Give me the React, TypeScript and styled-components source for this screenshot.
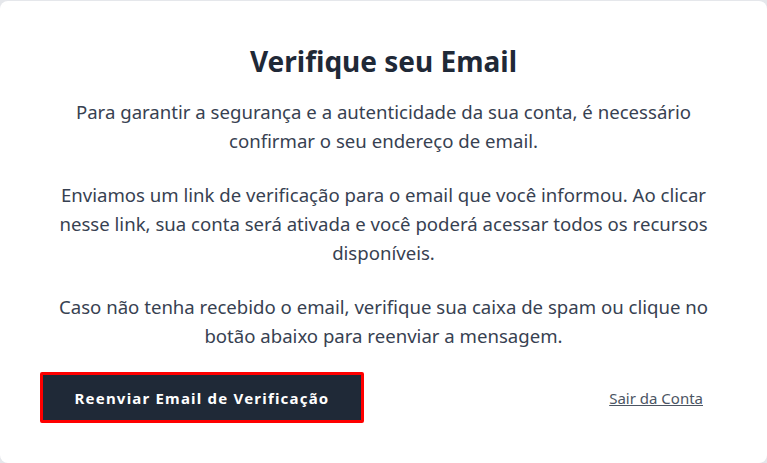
import styled, { createGlobalStyle } from 'styled-components';

const GlobalStyle = createGlobalStyle`
  html, body {
    margin: 0;
    padding: 0;
    background: #e5e7eb;
  }
  body {
    font-family: "Noto Sans", "Open Sans", sans-serif;
  }
`;

const Page = styled.div`
  width: 767px;
  height: 463px;
  padding-top: 1px;
  box-sizing: border-box;
`;

const Card = styled.main`
  height: 462px;
  box-sizing: border-box;
  background: #ffffff;
  border-radius: 8px;
  padding: 40px 30px 0;
  display: flex;
  flex-direction: column;
  align-items: center;
`;

const Title = styled.h1`
  margin: 0 0 16px;
  font-size: 28px;
  font-weight: 700;
  color: #1f2937;
  line-height: 40px;
`;

const Text = styled.p`
  margin: 0 0 25px;
  font-size: 18.6px;
  line-height: 29px;
  color: #374151;
  text-align: center;
  white-space: nowrap;

  &:last-of-type {
    margin-bottom: 22px;
  }
`;

const Actions = styled.div`
  align-self: stretch;
  display: flex;
  justify-content: space-between;
  align-items: center;
  padding: 0 34px 0 10px;
`;

const ResendButton = styled.button`
  width: 324px;
  height: 51px;
  background: #1f2937;
  color: #ffffff;
  border: 3px solid #ff0000;
  border-radius: 2px;
  font-family: inherit;
  font-size: 15px;
  font-weight: 700;
  letter-spacing: 1.2px;
  cursor: pointer;
`;

const LogoutLink = styled.a`
  font-size: 15px;
  color: #4b5563;
  text-decoration: underline;
  cursor: pointer;
`;

export default function App() {
  return (
    <Page>
      <GlobalStyle />
      <Card>
        <Title>Verifique seu Email</Title>
        <Text>
          Para garantir a segurança e a autenticidade da sua conta, é necessário
          <br />
          confirmar o seu endereço de email.
        </Text>
        <Text>
          Enviamos um link de verificação para o email que você informou. Ao clicar
          <br />
          nesse link, sua conta será ativada e você poderá acessar todos os recursos
          <br />
          disponíveis.
        </Text>
        <Text>
          Caso não tenha recebido o email, verifique sua caixa de spam ou clique no
          <br />
          botão abaixo para reenviar a mensagem.
        </Text>
        <Actions>
          <ResendButton>Reenviar Email de Verificação</ResendButton>
          <LogoutLink>Sair da Conta</LogoutLink>
        </Actions>
      </Card>
    </Page>
  );
}
